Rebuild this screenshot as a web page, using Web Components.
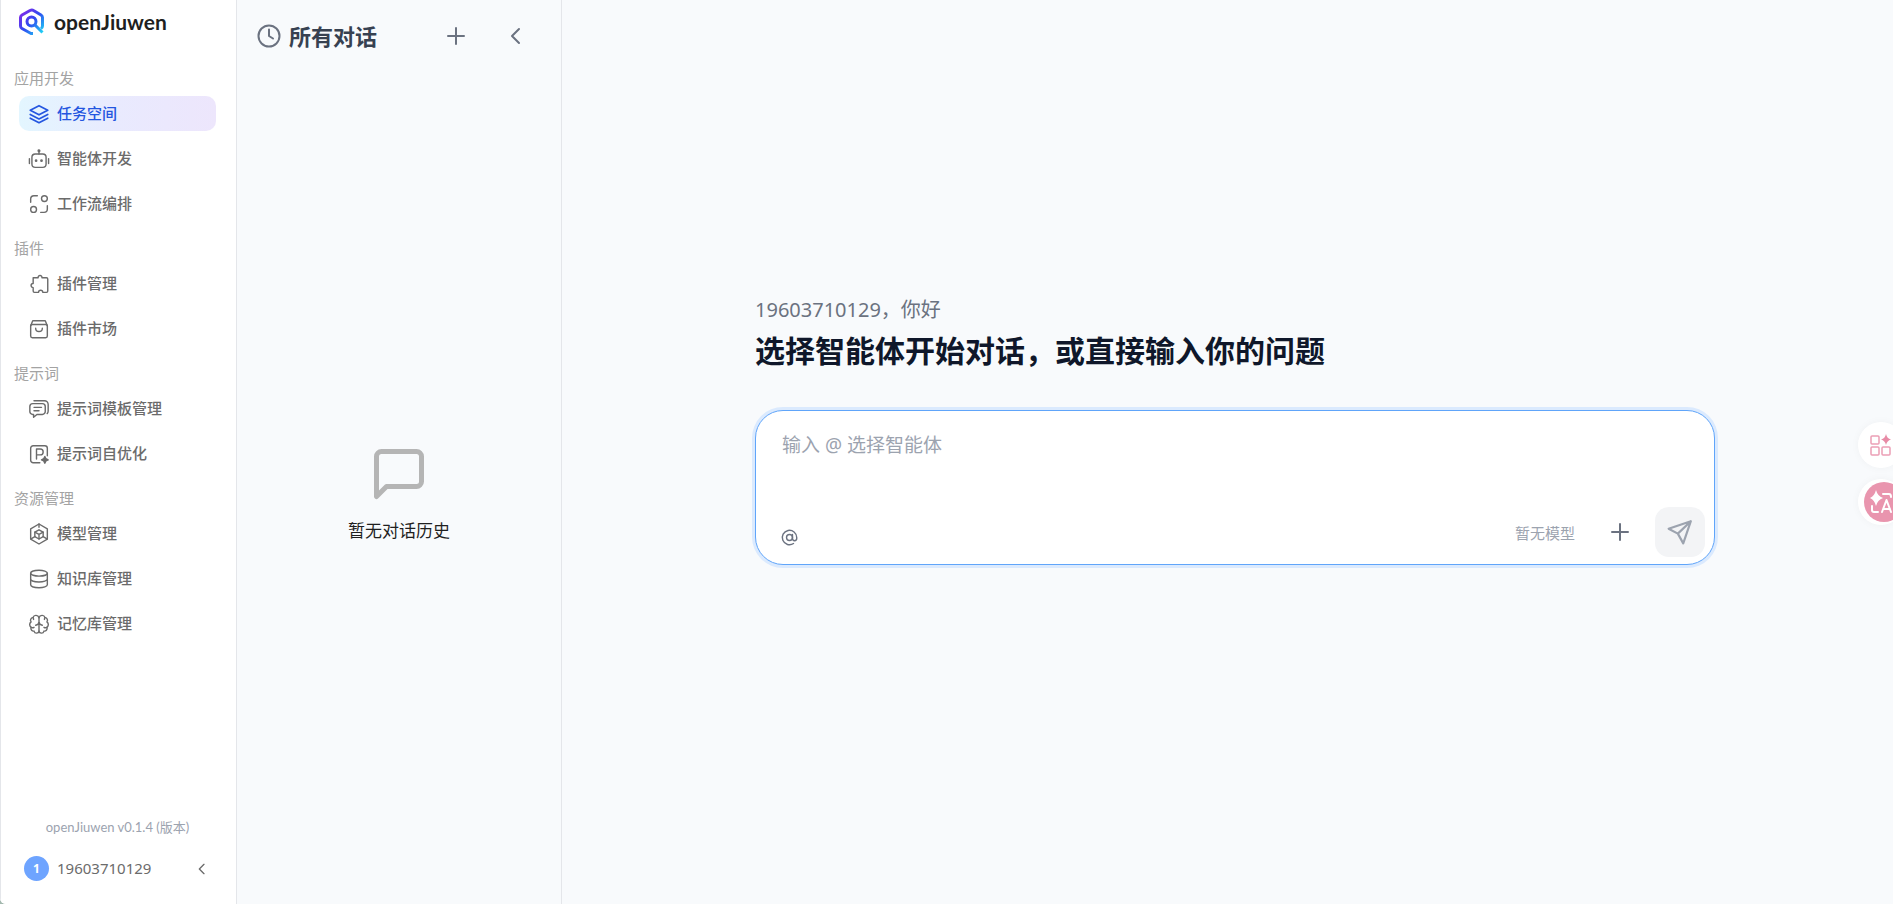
<!DOCTYPE html>
<html lang="zh-CN">
<head>
<meta charset="utf-8">
<meta name="viewport" content="width=device-width, initial-scale=1">
<title>openJiuwen</title>
<style>
  body {
    margin: 0;
    background: #a3b8ae;
    font-family: "Noto Sans", "Noto Sans CJK SC", sans-serif;
    font-size: 15px;
    --page: #f8fafc;
    --line: #e4e6ea;
    --text: #6b6b6b;
    --muted: #a3a3a3;
  }
</style>
</head>
<body>
<app-shell>
  <app-sidebar slot="sidebar" version="openJiuwen v0.1.4 (版本)" user="19603710129">
    <nav-group label="应用开发">
      <nav-item icon="layers" active>任务空间</nav-item>
      <nav-item icon="bot">智能体开发</nav-item>
      <nav-item icon="flow">工作流编排</nav-item>
    </nav-group>
    <nav-group label="插件">
      <nav-item icon="puzzle">插件管理</nav-item>
      <nav-item icon="market">插件市场</nav-item>
    </nav-group>
    <nav-group label="提示词">
      <nav-item icon="prompts">提示词模板管理</nav-item>
      <nav-item icon="optimize">提示词自优化</nav-item>
    </nav-group>
    <nav-group label="资源管理">
      <nav-item icon="model">模型管理</nav-item>
      <nav-item icon="database">知识库管理</nav-item>
      <nav-item icon="brain">记忆库管理</nav-item>
    </nav-group>
  </app-sidebar>
  <history-panel slot="history" heading="所有对话">暂无对话历史</history-panel>
  <chat-start user="19603710129">
    <chat-composer placeholder="输入 @ 选择智能体" model="暂无模型"></chat-composer>
  </chat-start>
</app-shell>
<floating-tools></floating-tools>

<script>
const ICONS = {
  layers: `<path d="M12 2 22.5 7.5 12 13 1.5 7.5Z"/><path d="m1.5 12.5 10.5 5.5 10.5-5.5"/><path d="m1.5 17 10.5 5.5L22.5 17"/>`,
  bot: `<rect x="3.5" y="6" width="17" height="16" rx="4"/><path d="M12 6V2M0.5 11.5v6M23.5 11.5v6"/><circle cx="12" cy="2" r="1" fill="currentColor"/><circle cx="8.5" cy="14" r="0.8" fill="currentColor"/><circle cx="15" cy="14" r="0.8" fill="currentColor"/>`,
  flow: `<circle cx="18.5" cy="5.5" r="3.5"/><circle cx="5.5" cy="18.5" r="3.5"/><path d="M2 10V6a4 4 0 0 1 4-4h4M22 14v4a4 4 0 0 1-4 4h-4"/>`,
  puzzle: `<path d="M5.5 4.5H11a2.3 2.3 0 1 1 4.5 0H21A1.5 1.5 0 0 1 22.5 6v14.5A1.5 1.5 0 0 1 21 22h-4.5a2.5 2.5 0 0 0-5 0h-5A1.5 1.5 0 0 1 5 20.5v-4.2a2.5 2.5 0 1 1 0-5V4.5Z"/>`,
  market: `<rect x="2" y="6.5" width="20" height="16" rx="2"/><path d="M2 8 4.5 2h15L22 8M8 11a4 4 0 0 0 8 0"/>`,
  prompts: `<path d="M4.5 5.5H16A3.5 3.5 0 0 1 19.5 9v6a3.5 3.5 0 0 1-3.5 3.5H9.5l-4 3.5v-3.500h-1A3.5 3.5 0 0 1 1 15V9a3.5 3.5 0 0 1 3.5-3.500Z"/><path d="M6 2h12.5A4.5 4.5 0 0 1 23 6.500v8q0 2-1.200 3M6 10h9M6 14h6"/>`,
  optimize: `<path d="M13 22.5H5a3 3 0 0 1-3-3V5a3 3 0 0 1 3-3h14a3 3 0 0 1 3 3v9"/><path d="M9 18V6h4.5a3.5 3.5 0 0 1 0 7H9"/><path d="m19 15 1.3 2.7L23 19l-2.7 1.3L19 23l-1.3-2.7L15 19l2.7-1.3Z" fill="currentColor"/>`,
  model: `<path d="m12 0 10 5.8v12.4L12 24 2 18.2V5.8Z"/><path d="m12 7 5 2.8v5.4L12 18l-5-2.8V9.8Z"/><path d="m7 9.8 5 2.7 5-2.7M12 12.5V18M12 0v4M2.5 17.8 7 15.2M21.5 17.8 17 15.2"/>`,
  database: `<ellipse cx="12" cy="5" rx="10" ry="3.5"/><path d="M2 5v14c0 2 4.5 3.5 10 3.5s10-1.5 10-3.5V5M2 12c0 2 4.5 3.5 10 3.5S22 14 22 12"/>`,
  brain: `<path d="M12 4.500C11 1 6 0.500 5 4 2 4.500 1 7.500 2.500 9.500 0 11.500 0.500 14.500 2.500 16 1.500 19 4 21 6 20.500 7 24 11.500 23.500 12 20.500M12 4.500C13 1 18 0.500 19 4 22 4.500 23 7.500 21.500 9.500 24 11.500 23.500 14.500 21.500 16 22.500 19 20 21 18 20.500 17 24 12.500 23.500 12 20.500"/><path d="M12 4.500v16M8 13.500q3.500-0.500 4-4 0.500 3.500 4 4M2.500 16q2 1 3.500 0M21.500 16q-2 1-3.500 0M5 4l0.500 2.500M19 4l-0.500 2.500"/>`,
  clock: `<circle cx="12" cy="12" r="10.5"/><path d="M12 5.5V12l4 2.5"/>`,
  plus: `<path d="M12 4v16M4 12h16"/>`,
  back: `<path d="m15 5-7 7 7 7"/>`,
  message: `<path d="M21 15a2 2 0 0 1-2 2H7l-4 4V5a2 2 0 0 1 2-2h14a2 2 0 0 1 2 2Z"/>`,
  at: `<circle cx="12" cy="12" r="4.2"/><path d="M16.2 7.8v5.7a3 3 0 0 0 6 0V12a10.2 10.2 0 1 0-4.5 8.5"/>`,
  send: `<path d="M22 2 1.5 9l8.5 4.5L15 22.5ZM10 13.5 22 2"/>`,
};

class UiIcon extends HTMLElement {
  connectedCallback() {
    const size = this.getAttribute("size") || 20;
    const stroke = this.getAttribute("stroke") || 2;
    this.attachShadow({ mode: "open" }).innerHTML = `
      <style>
        :host { display: inline-flex; flex: none; }
        svg { display: block; overflow: visible; }
      </style>
      <svg width="${size}" height="${size}" viewBox="0 0 24 24" fill="none" stroke="currentColor"
        stroke-width="${stroke}" stroke-linecap="round" stroke-linejoin="round" aria-hidden="true">
        ${ICONS[this.getAttribute("name")]}
      </svg>
    `;
  }
}

class AppShell extends HTMLElement {
  connectedCallback() {
    this.attachShadow({ mode: "open" }).innerHTML = `
      <style>
        :host {
          display: grid;
          grid-template-columns: 237px 325px 1fr;
          min-height: 100vh;
          box-sizing: border-box;
          background: var(--page);
          border-radius: 0 0 0 6px;
          overflow: hidden;
        }
      </style>
      <slot name="sidebar"></slot>
      <slot name="history"></slot>
      <slot></slot>
    `;
  }
}

class AppSidebar extends HTMLElement {
  connectedCallback() {
    const user = this.getAttribute("user");
    this.attachShadow({ mode: "open" }).innerHTML = `
      <style>
        :host {
          display: flex;
          flex-direction: column;
          box-sizing: border-box;
          background: #fff;
          border: 0 solid var(--line);
          border-width: 0 1px;
          color: var(--text);
        }
        header {
          display: flex;
          align-items: center;
          gap: 8px;
          height: 44px;
          padding-left: 17px;
          color: #1f1f1f;
          font: bold 21px/28px Lato, sans-serif;
        }
        nav {
          display: flex;
          flex-direction: column;
          gap: 15px;
          padding: 22px 20px 0 13px;
        }
        footer {
          margin-top: auto;
          padding: 20px 20px 18px 18px;
        }
        .version {
          margin: 0 0 14px;
          text-align: center;
          color: #9ca3af;
          font-family: Lato, "Noto Sans CJK SC", sans-serif;
          font-size: 13px;
          line-height: 20px;
        }
        .user {
          display: flex;
          align-items: center;
          gap: 8px;
          height: 35px;
          padding-left: 5px;
          line-height: 21px;
        }
        .avatar {
          width: 25px;
          border-radius: 50%;
          background: #6ea4ff;
          color: #fff;
          font-size: 12px;
          font-weight: bold;
          line-height: 25px;
          text-align: center;
        }
        button {
          display: grid;
          place-items: center;
          width: 28px;
          height: 28px;
          margin-left: auto;
          padding: 0;
          border: 0;
          background: none;
          color: inherit;
        }
      </style>
      <header>
        <svg width="28" height="28" viewBox="0 0 28 28" fill="none" aria-hidden="true">
          <defs>
            <linearGradient id="brand" x1="3" y1="6" x2="24" y2="26" gradientUnits="userSpaceOnUse">
              <stop offset="0" stop-color="#7a2bea"/>
              <stop offset=".45" stop-color="#2f4cf0"/>
              <stop offset="1" stop-color="#1fd8f5"/>
            </linearGradient>
          </defs>
          <g stroke="url(#brand)" stroke-width="3" stroke-linejoin="round">
            <path d="M15 25.500h-2L4 20.500q-1.500-1-1.500-2.500V9.500Q2.500 8 4 7l8-4.500q2-1 3.500 0l7.500 4.500q1.500 1 1.500 2.500v8.500q0 1.500-1.500 2.500"/>
            <circle cx="13.5" cy="13.5" r="4.5"/>
            <path d="m17 17 7.500 7.500"/>
          </g>
        </svg>
        <span>openJiuwen</span>
      </header>
      <nav><slot></slot></nav>
      <footer>
        <p class="version">${this.getAttribute("version")}</p>
        <div class="user">
          <span class="avatar">${user[0]}</span>
          <span>${user}</span>
          <button type="button" aria-label="收起侧栏"><ui-icon name="back" size="16" stroke="2"></ui-icon></button>
        </div>
      </footer>
    `;
  }
}

class NavGroup extends HTMLElement {
  connectedCallback() {
    this.attachShadow({ mode: "open" }).innerHTML = `
      <style>
        :host { display: block; }
        h2 {
          margin: 0 0 5px;
          color: var(--muted);
          font-size: 15px;
          font-weight: 400;
          line-height: 25px;
        }
        .items {
          display: flex;
          flex-direction: column;
          gap: 10px;
          padding-left: 5px;
        }
      </style>
      <h2>${this.getAttribute("label")}</h2>
      <div class="items"><slot></slot></div>
    `;
  }
}

class NavItem extends HTMLElement {
  connectedCallback() {
    this.attachShadow({ mode: "open" }).innerHTML = `
      <style>
        :host { display: block; }
        a {
          display: flex;
          align-items: center;
          gap: 8px;
          height: 35px;
          padding: 0 10px;
          border-radius: 10px;
          color: var(--text);
          line-height: 21px;
          text-decoration: none;
          font-weight: 500;
        }
        :host([active]) a {
          background: linear-gradient(90deg, #e3f6ff, #e9eafe 50%, #ede6fc);
          color: #2456e0;
        }
      </style>
      <a href="#"><ui-icon name="${this.getAttribute("icon")}" size="20" stroke="${this.hasAttribute("active") ? 2 : 1.7}"></ui-icon><slot></slot></a>
    `;
  }
}

class HistoryPanel extends HTMLElement {
  connectedCallback() {
    this.attachShadow({ mode: "open" }).innerHTML = `
      <style>
        :host {
          display: flex;
          flex-direction: column;
          box-sizing: border-box;
          border-right: 1px solid var(--line);
          color: #6b7280;
        }
        header {
          display: flex;
          align-items: center;
          height: 72px;
          padding: 0 25px 0 20px;
        }
        h2 {
          margin: 0 auto 0 8px;
          color: #374151;
          font-size: 22px;
          line-height: 32px;
        }
        button {
          display: grid;
          place-items: center;
          width: 40px;
          height: 40px;
          padding: 0;
          border: 0;
          background: none;
          color: inherit;
        }
        button + button { margin-left: 20px; }
        .empty {
          flex: 1;
          display: flex;
          flex-direction: column;
          align-items: center;
          justify-content: center;
          gap: 14px;
          padding-top: 12px;
          color: #b5b5b5;
        }
        p {
          margin: 0;
          color: #1f1f1f;
          font-size: 17px;
          line-height: 26px;
        }
      </style>
      <header>
        <ui-icon name="clock" size="24" stroke="2"></ui-icon>
        <h2>${this.getAttribute("heading")}</h2>
        <button type="button" aria-label="新建对话"><ui-icon name="plus" size="24"></ui-icon></button>
        <button type="button" aria-label="收起"><ui-icon name="back" size="24"></ui-icon></button>
      </header>
      <div class="empty">
        <ui-icon name="message" size="60" stroke="2"></ui-icon>
        <p><slot></slot></p>
      </div>
    `;
  }
}

class ChatStart extends HTMLElement {
  connectedCallback() {
    this.attachShadow({ mode: "open" }).innerHTML = `
      <style>
        :host {
          display: flex;
          flex-direction: column;
          align-items: center;
          justify-content: center;
          padding: 0 0 43px 15px;
        }
        .column { width: 100%; max-width: 960px; }
        p {
          margin: 0 0 5px;
          color: #6b7280;
          font-size: 20px;
          line-height: 28px;
        }
        h1 {
          margin: 0 0 37px;
          color: #0f172a;
          font-size: 30px;
          line-height: 44px;
        }
      </style>
      <div class="column">
        <p>${this.getAttribute("user")}，你好</p>
        <h1>选择智能体开始对话，或直接输入你的问题</h1>
        <slot></slot>
      </div>
    `;
  }
}

class ChatComposer extends HTMLElement {
  connectedCallback() {
    const placeholder = this.getAttribute("placeholder");
    this.attachShadow({ mode: "open" }).innerHTML = `
      <style>
        :host { display: block; }
        form {
          box-sizing: border-box;
          padding: 20px 9px 7px 17px;
          border: 1px solid #60a5fa;
          border-radius: 28px;
          background: #fff;
          box-shadow: 0 0 0 3px #dbeafe;
        }
        textarea {
          display: block;
          box-sizing: border-box;
          width: 100%;
          height: 76px;
          padding: 0 9px;
          border: 0;
          outline: 0;
          resize: none;
          background: none;
          color: #1f2937;
          font: inherit;
          font-size: 19px;
          line-height: 28px;
        }
        textarea::placeholder { color: #9ca3af; }
        .bar {
          display: flex;
          align-items: center;
          gap: 15px;
        }
        button {
          display: grid;
          place-items: center;
          width: 40px;
          height: 40px;
          padding: 0;
          border: 0;
          background: none;
          color: #6b7280;
          font: inherit;
        }
        .mention {
          align-self: flex-end;
          width: 32px;
          margin-right: auto;
        }
        .model {
          width: auto;
          padding: 0 10px;
          color: #9ca3af;
        }
        .send {
          width: 50px;
          height: 50px;
          border-radius: 14px;
          background: #f3f4f6;
          color: #9ca3af;
        }
      </style>
      <form>
        <textarea aria-label="${placeholder}" placeholder="${placeholder}"></textarea>
        <div class="bar">
          <button class="mention" type="button" aria-label="选择智能体"><ui-icon name="at" size="17"></ui-icon></button>
          <button class="model" type="button">${this.getAttribute("model")}</button>
          <button type="button" aria-label="添加"><ui-icon name="plus" size="24"></ui-icon></button>
          <button class="send" type="button" aria-label="发送"><ui-icon name="send" size="26"></ui-icon></button>
        </div>
      </form>
    `;
  }
}

// Shortcuts docked to the right edge, half tucked behind it
class FloatingTools extends HTMLElement {
  connectedCallback() {
    this.attachShadow({ mode: "open" }).innerHTML = `
      <style>
        :host {
          position: fixed;
          top: 422px;
          right: 0;
          display: flex;
          flex-direction: column;
          gap: 11px;
          width: 35px;
          clip-path: inset(-20px 0 -20px -20px);
        }
        button {
          display: block;
          width: 46px;
          height: 46px;
          padding: 0;
          border: 0;
          border-radius: 50%;
          background: #fff;
          box-shadow: 0 0 8px rgba(0, 0, 0, .04);
        }
        svg { display: block; }
      </style>
      <button type="button" aria-label="工具">
        <svg width="46" height="46" viewBox="0 0 46 46" fill="none" stroke="#eb9fb5" stroke-width="1.5">
          <rect x="13" y="14" width="8" height="8" rx="1"/>
          <rect x="13" y="25" width="8" height="8" rx="1"/>
          <rect x="24" y="25" width="8" height="8" rx="1"/>
          <path d="M28 12q1 4.500 5 5.500-4 1-5 5.500-1-4.500-5-5.500 4-1 5-5.500Z" fill="#e88ba6" stroke="none"/>
        </svg>
      </button>
      <button type="button" aria-label="翻译">
        <svg width="46" height="46" viewBox="0 0 46 46" fill="none" stroke="#fff" stroke-width="2" stroke-linecap="round" stroke-linejoin="round">
          <circle cx="26" cy="23" r="20" fill="#e995ae" stroke="none"/>
          <path d="M18 11q1.500 6 7 8-5.500 2-7 8-1.500-6-6-8 4.500-2 6-8Z" fill="#fff" stroke="none"/>
          <path d="M25 15h6q2 0 2 3M14 27v4q0 2 2 2h4M24 33l4.500-12L33 33M26 30h6"/>
        </svg>
      </button>
    `;
  }
}

customElements.define("ui-icon", UiIcon);
customElements.define("nav-item", NavItem);
customElements.define("nav-group", NavGroup);
customElements.define("app-sidebar", AppSidebar);
customElements.define("history-panel", HistoryPanel);
customElements.define("chat-composer", ChatComposer);
customElements.define("chat-start", ChatStart);
customElements.define("app-shell", AppShell);
customElements.define("floating-tools", FloatingTools);
</script>
</body>
</html>
